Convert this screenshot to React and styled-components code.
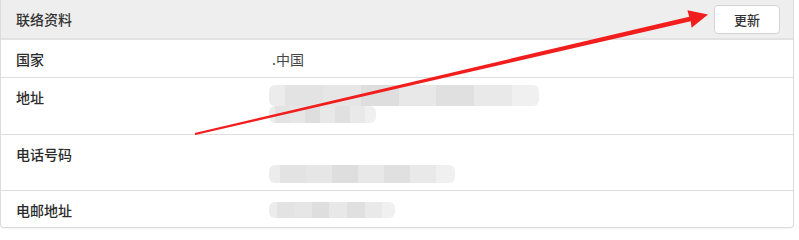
import React from "react";
import styled, { createGlobalStyle } from "styled-components";

const GlobalStyle = createGlobalStyle`
  html, body {
    margin: 0;
    padding: 0;
    background: #fff;
  }
  body {
    font-family: "Microsoft YaHei", "Noto Sans CJK SC", "Noto Sans", sans-serif;
    color: #333;
  }
`;

const rows = [
  { label: "国家", value: ".中国", pb: 9 },
  { label: "地址", blur: [{ w: 270, h: 21 }, { w: 107, h: 17 }], pad: -3, pb: 10 },
  { label: "电话号码", blur: [{ w: 186, h: 18 }], pad: 20, pb: 9 },
  { label: "电邮地址", blur: [{ w: 126, h: 16 }], pad: 1, pb: 8 },
];

const Page = styled.div`
  position: relative;
  width: 799px;
  height: 233px;
  overflow: hidden;
`;

const Panel = styled.div`
  width: 792px;
  border: 1px solid #dcdcdc;
  border-top: none;
  border-radius: 0 0 4px 4px;
  box-shadow: 0 1px 1px rgba(0, 0, 0, 0.04);
`;

const Header = styled.div`
  height: 38px;
  display: flex;
  align-items: center;
  justify-content: space-between;
  padding: 0 13px 0 15px;
  background: #eeeeee;
  border-bottom: 2px solid #e2e2e2;
`;

const Title = styled.div`
  font-size: 14px;
  line-height: 18px;
  font-weight: 500;
  color: #333;
`;

const Button = styled.button`
  width: 66px;
  height: 29px;
  margin-top: 1px;
  border: 1px solid #d4d4d4;
  border-radius: 4px;
  background: #fff;
  font-family: inherit;
  font-size: 13px;
  font-weight: 500;
  color: #333;
  padding: 0;
`;

const Row = styled.div`
  display: grid;
  grid-template-columns: 252px 1fr;
  padding: 10px 15px ${(p) => p.$pb}px;
  border-bottom: ${(p) => (p.$last ? "none" : "1px solid #dedede")};
`;

const Label = styled.div`
  font-size: 14px;
  line-height: 18px;
  font-weight: 500;
  color: #2b2b2b;
`;

const Value = styled.div`
  font-size: 14px;
  line-height: 18px;
  color: #444;
  height: ${(p) => p.$h}px;
  padding-left: 4px;
`;

const BlurWrap = styled.div`
  display: flex;
  flex-direction: column;
  margin-top: ${(p) => p.$pad}px;
  margin-left: -3px;
`;

const Blur = styled.div`
  height: ${(p) => p.$h}px;
  border-radius: 6px;
  background: linear-gradient(
    90deg,
    #ececec 0 6%,
    #e3e3e3 6% 20%,
    #e6e6e6 20% 34%,
    #dedede 34% 48%,
    #e8e8e8 48% 62%,
    #e0e0e0 62% 76%,
    #e9e9e9 76% 90%,
    #f0f0f0 90% 100%
  );
`;

const Overlay = styled.svg`
  position: absolute;
  left: 0;
  top: 0;
  pointer-events: none;
`;

const Arrow = () => (
  <Overlay width="799" height="233" viewBox="0 0 799 233">
    <polygon
      fill="#f21d1d"
      points="195.3,135.1 194.7,132.9 689.2,16.8 687.4,10.2 708,14.5 691.6,27.8 690.7,21.3"
    />
  </Overlay>
);

export default function App() {
  return (
    <Page>
      <GlobalStyle />
      <Panel>
        <Header>
          <Title>联络资料</Title>
          <Button>更新</Button>
        </Header>
        {rows.map((r, i) => (
          <Row key={r.label} $pb={r.pb} $last={i === rows.length - 1}>
            <Label>{r.label}</Label>
            {r.blur ? (
              <Value $h={i === 1 || i === 2 ? 36 : 18}>
                <BlurWrap $pad={r.pad}>
                  {r.blur.map((b, j) => (
                    <Blur key={j} style={{ width: b.w }} $h={b.h} />
                  ))}
                </BlurWrap>
              </Value>
            ) : (
              <Value $h={18}>{r.value}</Value>
            )}
          </Row>
        ))}
      </Panel>
      <Arrow />
    </Page>
  );
}
